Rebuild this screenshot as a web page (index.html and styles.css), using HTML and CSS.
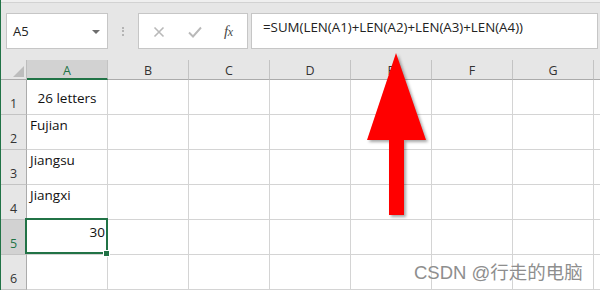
FILE: index.html
```html
<!DOCTYPE html>
<html>
<head>
<meta charset="utf-8">
<link rel="stylesheet" href="styles.css">
</head>
<body>
<div class="app">
  <div class="topstrip"></div>
  <div class="toolbar">
    <div class="namebox"><span class="ref">A5</span><span class="caret"></span></div>
    <div class="grip"><i></i><i></i><i></i></div>
    <div class="fnbox">
      <svg class="ico" width="12" height="12" viewBox="0 0 12 12"><path d="M1.5 1.5 L10.5 10.5 M10.5 1.5 L1.5 10.5" stroke="#b9b9b9" stroke-width="1.6" fill="none"/></svg>
      <svg class="ico" width="14" height="12" viewBox="0 0 14 12"><path d="M1 6.5 L5 10.5 L13 1.5" stroke="#b9b9b9" stroke-width="1.9" fill="none"/></svg>
      <span class="fx"><i>f</i><i class="x">x</i></span>
    </div>
    <div class="formula">=SUM(LEN(A1)+LEN(A2)+LEN(A3)+LEN(A4))</div>
  </div>
  <div class="sheet">
    <div class="corner"><span class="tri"></span></div>
    <div class="ch sel">A</div><div class="ch">B</div><div class="ch">C</div><div class="ch">D</div><div class="ch">E</div><div class="ch">F</div><div class="ch">G</div><div class="ch last"></div>

    <div class="rh">1</div><div class="c center">26 letters</div><div class="c"></div><div class="c"></div><div class="c"></div><div class="c"></div><div class="c"></div><div class="c"></div><div class="c last"></div>
    <div class="rh">2</div><div class="c top">Fujian</div><div class="c"></div><div class="c"></div><div class="c"></div><div class="c"></div><div class="c"></div><div class="c"></div><div class="c last"></div>
    <div class="rh">3</div><div class="c top">Jiangsu</div><div class="c"></div><div class="c"></div><div class="c"></div><div class="c"></div><div class="c"></div><div class="c"></div><div class="c last"></div>
    <div class="rh">4</div><div class="c top">Jiangxi</div><div class="c"></div><div class="c"></div><div class="c"></div><div class="c"></div><div class="c"></div><div class="c"></div><div class="c last"></div>
    <div class="rh sel">5</div><div class="c top num active">30<span class="handle"></span></div><div class="c"></div><div class="c"></div><div class="c"></div><div class="c"></div><div class="c"></div><div class="c"></div><div class="c last"></div>
    <div class="rh">6</div><div class="c"></div><div class="c"></div><div class="c"></div><div class="c"></div><div class="c"></div><div class="c"></div><div class="c"></div><div class="c last"></div>
  </div>
  <svg class="arrow" width="600" height="290" viewBox="0 0 600 290">
    <polygon points="395,53 425,140 403,140 403,215 388,215 388,140 366,140" fill="#ff0000"/>
  </svg>
  <div class="watermark">CSDN @行走的电脑</div>
</div>
</body>
</html>
```

FILE: styles.css
```css
* { box-sizing: border-box; }
html, body { margin: 0; padding: 0; background: #ffffff; }
.app {
  position: relative;
  width: 600px;
  height: 290px;
  overflow: hidden;
  border-left: 1px solid #217346;
  background: #e6e6e6;
}
.topstrip {
  height: 3px;
  background: #efefef;
  border-bottom: 1px solid #d2d2d2;
}
.toolbar {
  display: flex;
  align-items: flex-start;
  height: 57px;
  padding: 10px 0 0 5px;
}
.namebox {
  width: 102px;
  height: 36px;
  background: #fff;
  border: 1px solid #c6c6c6;
  display: flex;
  align-items: center;
  justify-content: space-between;
  padding: 0 7px 0 6px;
  font-family: "Open Sans", "Noto Sans", sans-serif;
  font-size: 13px;
  color: #222;
}
.caret {
  width: 0; height: 0;
  border-left: 4px solid transparent;
  border-right: 4px solid transparent;
  border-top: 4px solid #6d6d6d;
  margin-top: 1px;
}
.grip {
  width: 30px;
  height: 36px;
  display: flex;
  flex-direction: column;
  align-items: center;
  justify-content: center;
  gap: 1.5px;
}
.grip i {
  display: block;
  width: 2px; height: 2px;
  background: #b4b4b4;
}
.fnbox {
  width: 110px;
  height: 36px;
  background: #fff;
  border: 1px solid #c6c6c6;
  display: flex;
  align-items: center;
  padding: 1px 0 0 14px;
}
.fnbox .ico:nth-child(2) { margin-left: 23px; }
.fx {
  margin-left: 22px;
  font-family: "Liberation Serif", serif;
  font-style: italic;
  font-size: 15px;
  color: #4a4a4a;
  letter-spacing: -0.5px;
}
.fx i { font-style: italic; }
.fx .x { font-size: 12px; }
.formula {
  margin-left: 3px;
  width: 347px;
  height: 36px;
  background: #fff;
  border: 1px solid #c6c6c6;
  padding: 4px 0 0 11px;
  font-family: "Open Sans", "Noto Sans", sans-serif;
  font-size: 13.3px;
  color: #222;
  white-space: nowrap;
}
.sheet {
  display: grid;
  grid-template-columns: 26px repeat(7, 81px) 1fr;
  grid-template-rows: 20px repeat(6, 35px);
  background: #fff;
}
.corner {
  position: relative;
  background: #e6e6e6;
  border-right: 1px solid #bdbdbd;
  border-bottom: 1px solid #ababab;
}
.tri {
  position: absolute;
  right: 2px;
  bottom: 2px;
  width: 0; height: 0;
  border-left: 11px solid transparent;
  border-bottom: 11px solid #bdbdbd;
}
.ch {
  background: #e6e6e6;
  border-right: 1px solid #c3c3c3;
  border-bottom: 1px solid #ababab;
  display: flex;
  align-items: center;
  justify-content: center;
  font-family: "Open Sans", "Noto Sans", sans-serif;
  font-size: 12.5px;
  color: #333;
  padding-top: 1px;
}
.ch.sel {
  background: #d2d2d2;
  color: #217346;
  border-bottom: 2px solid #217346;
  padding-top: 2px;
}
.ch.last { border-right: none; }
.rh {
  background: #e6e6e6;
  border-right: 1px solid #ababab;
  border-bottom: 1px solid #c3c3c3;
  display: flex;
  align-items: flex-end;
  justify-content: center;
  padding-bottom: 2px;
  font-family: "Open Sans", "Noto Sans", sans-serif;
  font-size: 12.5px;
  color: #333;
}
.rh.sel { background: #d2d2d2; color: #217346; }
.c {
  position: relative;
  border-right: 1px solid #d4d4d4;
  border-bottom: 1px solid #d4d4d4;
  font-family: "Open Sans", "Noto Sans", sans-serif;
  font-size: 13.5px;
  color: #111;
  white-space: nowrap;
}
.c.last { border-right: none; }
.c.center {
  display: flex;
  align-items: center;
  justify-content: center;
  padding-top: 1px;
}
.c.top { padding: 1px 3px 0 3px; line-height: 18px; }
.c.num { text-align: right; padding-right: 2px; padding-top: 3px; }
.c.active::after {
  content: "";
  position: absolute;
  left: -2px;
  top: -2px;
  right: -1px;
  bottom: 0;
  border: 2px solid #217346;
}
.handle {
  position: absolute;
  right: -3px;
  bottom: -3px;
  width: 7px;
  height: 7px;
  background: #217346;
  border: 1px solid #fff;
  z-index: 2;
}
.arrow {
  position: absolute;
  left: 0;
  top: 0;
  pointer-events: none;
  filter: drop-shadow(2px 2px 1.5px rgba(0,0,0,0.35));
}
.watermark {
  position: absolute;
  left: 413px;
  top: 258px;
  font-family: "Liberation Sans", "Noto Sans CJK SC", sans-serif;
  font-size: 18.5px;
  color: #8e8e8e;
  text-shadow: 0 0 2px #fff;
  white-space: nowrap;
}
```
